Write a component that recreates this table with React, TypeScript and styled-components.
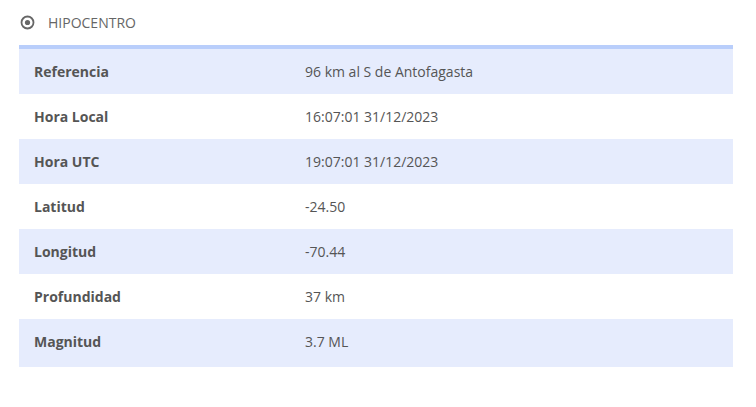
import styled, { createGlobalStyle } from 'styled-components'

const GlobalStyle = createGlobalStyle`
  body {
    margin: 0;
    background: #fff;
    font-family: 'Open Sans', 'Liberation Sans', sans-serif;
  }
`

const rows: [string, string][] = [
  ['Referencia', '96 km al S de Antofagasta'],
  ['Hora Local', '16:07:01 31/12/2023'],
  ['Hora UTC', '19:07:01 31/12/2023'],
  ['Latitud', '-24.50'],
  ['Longitud', '-70.44'],
  ['Profundidad', '37 km'],
  ['Magnitud', '3.7 ML'],
]

const Section = styled.section`
  width: 714px;
  padding: 0 0 0 19px;
`

const Header = styled.div`
  display: flex;
  align-items: center;
  gap: 13px;
  height: 45px;
  padding-left: 1px;
  color: #666;
  font-size: 14px;
  text-transform: uppercase;
  box-sizing: border-box;
`

const Table = styled.div`
  border-top: 4px solid #b9cefb;
`

const Row = styled.div<{ $striped: boolean }>`
  display: grid;
  grid-template-columns: 271px 1fr;
  align-items: center;
  height: 45px;
  background: ${p => (p.$striped ? '#e6ecfd' : '#fff')};
  color: #555;
  font-size: 14px;

  &:last-child {
    height: 48px;
    padding-bottom: 3px;
    box-sizing: border-box;
  }
`

const Label = styled.span`
  padding-left: 15px;
  font-weight: 700;
`

const Value = styled.span`
  padding-left: 15px;
`

function TargetIcon() {
  return (
    <svg width="15" height="15" viewBox="0 0 15 15">
      <circle cx="7.5" cy="7.5" r="6" fill="none" stroke="#666" strokeWidth="1.8" />
      <circle cx="7.5" cy="7.5" r="2.6" fill="#666" />
    </svg>
  )
}

export default function App() {
  return (
    <>
      <GlobalStyle />
      <Section>
        <Header>
          <TargetIcon />
          <span>Hipocentro</span>
        </Header>
        <Table>
          {rows.map(([label, value], idx) => (
            <Row key={label} $striped={idx % 2 === 0}>
              <Label>{label}</Label>
              <Value>{value}</Value>
            </Row>
          ))}
        </Table>
      </Section>
    </>
  )
}
